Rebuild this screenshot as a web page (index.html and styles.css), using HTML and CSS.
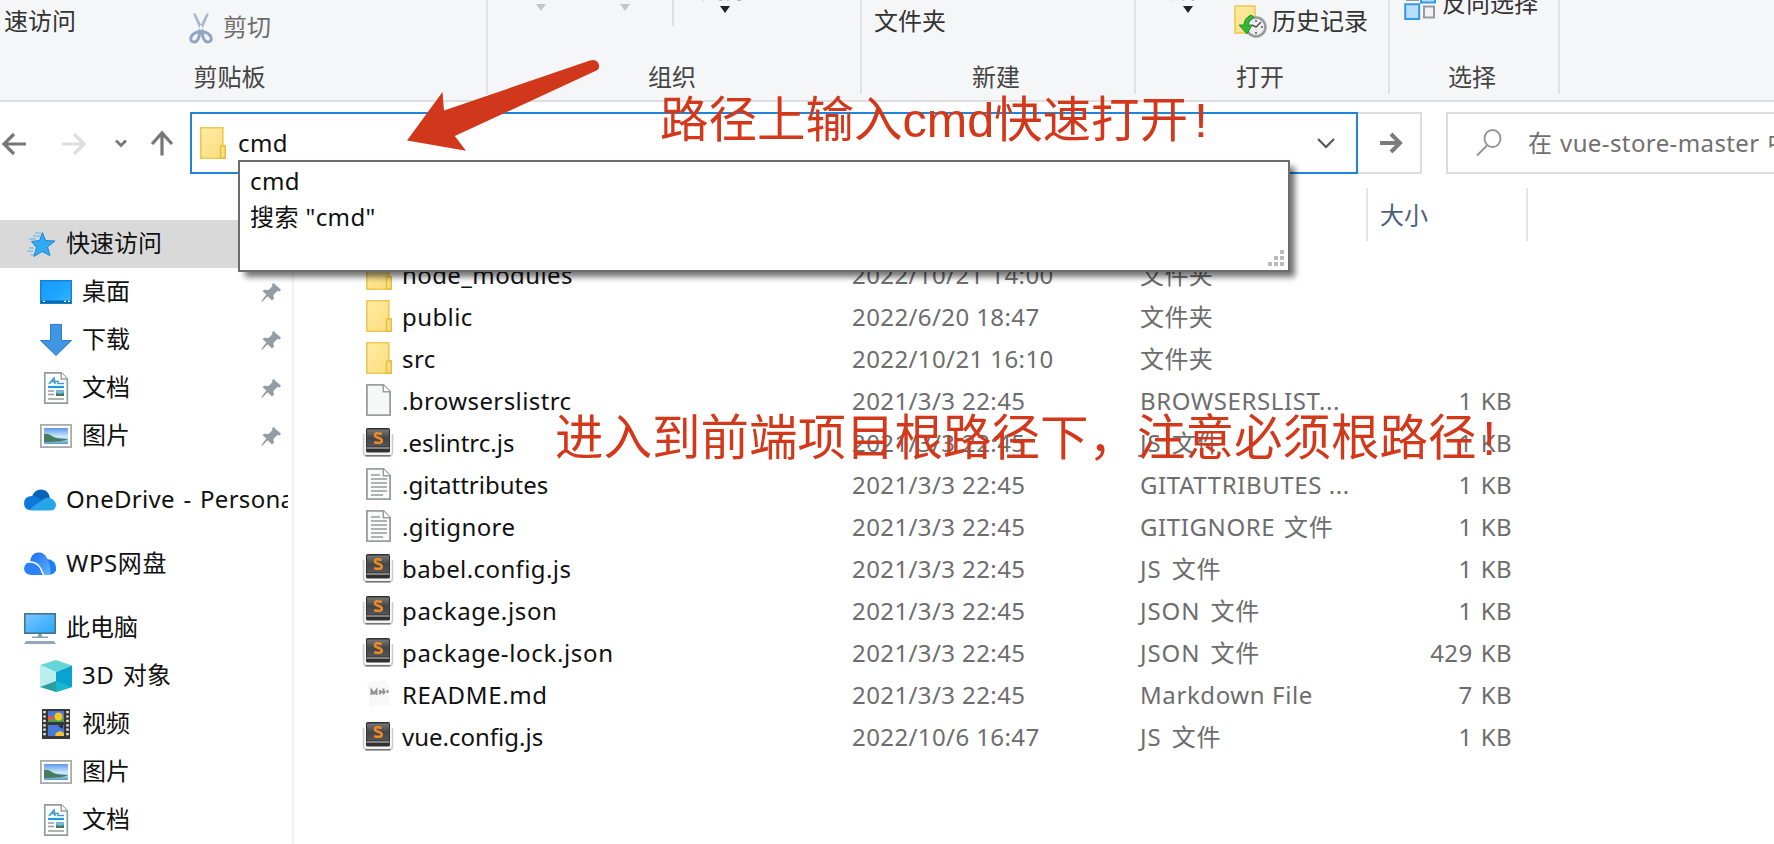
FILE: index.html
```html
<!DOCTYPE html>
<html lang="zh-CN">
<head>
<meta charset="utf-8">
<title>vue-store-master</title>
<link rel="stylesheet" href="styles.css">
</head>
<body>
<svg class="defs" aria-hidden="true">
  <defs>
    <linearGradient id="gFolder" x1="0" y1="0" x2="1" y2="1"><stop offset="0" stop-color="#ffeca4"/><stop offset="1" stop-color="#fbdc7c"/></linearGradient>
    <linearGradient id="gBlue" x1="0" y1="0" x2="1" y2="1"><stop offset="0" stop-color="#7cc8ff"/><stop offset="1" stop-color="#27a5fb"/></linearGradient>
    <linearGradient id="gDesk" x1="0" y1="0" x2="1" y2="1"><stop offset="0" stop-color="#149cfb"/><stop offset=".6" stop-color="#1fa6ff"/><stop offset="1" stop-color="#45b5ff"/></linearGradient>
    <linearGradient id="gSky" x1="0" y1="0" x2="0" y2="1"><stop offset="0" stop-color="#5a97ec"/><stop offset=".55" stop-color="#d3eafa"/><stop offset="1" stop-color="#5a9bd0"/></linearGradient>
    <linearGradient id="gDark" x1="0" y1="0" x2="0" y2="1"><stop offset="0" stop-color="#777"/><stop offset=".5" stop-color="#454545"/><stop offset="1" stop-color="#555"/></linearGradient>
    <linearGradient id="gWps" x1="0" y1="0" x2="1" y2="1"><stop offset="0" stop-color="#1769f5"/><stop offset="1" stop-color="#65b5ff"/></linearGradient>
    <symbol id="folder" viewBox="0 0 26 32"><path d="M.8.8h22v18h2.4v12.4H.8z" fill="url(#gFolder)" stroke="#edc950" stroke-width="1.6"/><path d="M20.5 31V20.5q0-1.7 2.3-1.7 2.4 0 2.4 1.7V31z" fill="#fbdf83" stroke="#e6bd3c" stroke-width="1.4"/></symbol>
    <symbol id="blank" viewBox="0 0 26 32"><path d="M.9.9h16.6l6.6 6.6v23.6H.9z" fill="#f6f8f8" stroke="#999d9d" stroke-width="1.8"/><path d="M17.3.9v6.8h6.8" fill="#fff" stroke="#999d9d" stroke-width="1.5"/></symbol>
    <symbol id="text" viewBox="0 0 26 32"><path d="M.9.9h16.6l6.6 6.6v23.6H.9z" fill="#f9fafa" stroke="#999d9d" stroke-width="1.8"/><path d="M17.3.9v6.8h6.8" fill="#fff" stroke="#999d9d" stroke-width="1.5"/><path d="M5 7h9M5 11h16M5 15h16M5 19h16M5 23h16M5 27h12" stroke="#999" stroke-width="1.4"/></symbol>
    <symbol id="sublime" viewBox="0 0 32 32"><path d="M1.500 8v18.500q0 3 3 3h23q3 0 3-3V8" fill="#fafafa" stroke="#cbcbcb" stroke-width="1.500"/><path d="M3.500 29.800h25" stroke="#777" stroke-width="1.600"/><rect x="4" y="2" width="24" height="24.500" rx="1.600" fill="#303030"/><rect x="5" y="3.500" width="22" height="17" fill="url(#gDark)"/><path d="M4.500 22h23" stroke="#b8b8b8" stroke-width="1.200"/><path d="M19.800 8q-6.800-2-6.800 1.200 0 1.600 3.300 2.600 3.500 1 3.500 3 0 3.200-7.600 1.400" fill="none" stroke="#f08a26" stroke-width="2.500"/></symbol>
    <symbol id="md" viewBox="0 0 26 32"><path d="M1 4l18-2 1 5 4 1v19L4 29z" fill="#f8f8f8"/><path d="M5.500 17v-5l2.500 3.500 2.500-3.500v5M14 12v4.500M17.500 10.500v6M14.500 14h5M21.500 12v3" fill="none" stroke="#929292" stroke-width="2"/></symbol>
    <symbol id="doc" viewBox="0 0 32 32"><path d="M4.8.8h16.5l6 6v24.4H4.8z" fill="#fff" stroke="#969b9d" stroke-width="1.7"/><path d="M21.200.8v6.200h6" fill="#fff" stroke="#969b9d" stroke-width="1.4"/><path d="M9 12l5-6 1 6M11 9.500h8M17 11.500h7" stroke="#3d9bd8" stroke-width="1.600" fill="none"/><path d="M8 15h16" stroke="#229ade" stroke-width="2.200"/><path d="M8 19h6M8 22.500h6M8 27h16" stroke="#999" stroke-width="1.3"/><path d="M16 18h8v6h-8z" fill="#73b5dd"/><path d="M16 21l4 1 4-1v3h-8z" fill="#417961"/></symbol>
    <symbol id="picture" viewBox="0 0 32 32"><rect x=".9" y="4.900" width="30.200" height="22.200" fill="#fff" stroke="#a9abac" stroke-width="1.8"/><path d="M4 8h24v16H4z" fill="url(#gSky)"/><path d="M4 14q4-1 8 2t16 3q-4 3-24 3z" fill="#487b5b"/></symbol>
    <symbol id="desktop" viewBox="0 0 32 32"><rect x=".7" y="4.700" width="30.600" height="22.600" fill="url(#gDesk)" stroke="#1681cc" stroke-width="1.4"/><path d="M1 24.500h30V27H1z" fill="#0e67ab"/><path d="M3 25.400h2M24 25.400h2M28 25.400h2" stroke="#fff" stroke-width="1.4"/></symbol>
    <symbol id="download" viewBox="0 0 32 32"><path d="M10.500.500h11v16h10L16 31.500.500 16.500h10z" fill="#3f97e4" stroke="#2e7fcb"/></symbol>
    <symbol id="star" viewBox="0 0 32 32"><path d="M18.500 4.500l3 8 9.500.500-7.500 6 2.500 8.500-8-4-8 5 2.500-9-5-6 8-1z" fill="#31aaf3" stroke="#188bcf"/><path d="M11 5h6M9 8h7M5 11h7M5 20h5M3 23h6M7 27h3" stroke="#5bb6e9" stroke-width="1.200"/></symbol>
    <symbol id="onedrive" viewBox="0 0 32 32"><path d="M8 13q2-7.500 9-7.500t9 8l-9 5z" fill="#0763b8"/><path d="M5 26q-5-1.500-5-7 .5-7 8-7 6 0 10 5l8 9z" fill="#0d7ad8"/><path d="M6 26q2-4 10-8 5-5 10-4 6 2 6 7.500-.4 5-6 5H9q-2 0-3-.500z" fill="#26a5ea"/></symbol>
    <symbol id="wps" viewBox="0 0 32 32"><path d="M18 12q7-3 12 2 5 8-1 12l-5 1z" fill="#1c7ff5"/><path d="M6 14q1-9 8-9.500 6-.5 9 5.500 5 11 3 17h-7q-1-10-13-13z" fill="url(#gWps)"/><path d="M7 27q-7-1-7-7 1-6 8-6 6 1 9 8l2 5z" fill="#2c82fa"/><path d="M5 14q8-1 12 7 1 4 3 6" stroke="#fff" stroke-width="1.500" fill="none"/></symbol>
    <symbol id="pc" viewBox="0 0 32 32"><rect x=".8" y="1.800" width="30.400" height="19.400" fill="url(#gBlue)" stroke="#477487" stroke-width="1.600"/><path d="M14 22h4v2.500h6v1.400H8v-1.400h6z" fill="#8aa4ae"/><path d="M2 29h28l2 3H0z" fill="#96a6ba"/></symbol>
    <symbol id="cube" viewBox="0 0 32 32"><path d="M16 0l16 5.500L16 12 0 5z" fill="#65d5da"/><path d="M0 5l16 7v20L0 27z" fill="#bdeeee"/><path d="M32 5.500L16 12v20l16-5z" fill="#08a3cf"/><path d="M0 27l16-6v11z" fill="#2b9fa0"/><path d="M32 27l-16-6v11z" fill="#15b9cf"/></symbol>
    <symbol id="video" viewBox="0 0 32 32"><path d="M2 1h28v30H2z" fill="#373737"/><path d="M4.500 3v26M27.500 3v26" stroke="#eee" stroke-width="2.400" stroke-dasharray="2.200 2.200"/><path d="M8 3h16v11H8zM8 17h16v11H8z" fill="#4878db"/><path d="M8 10h16v4H8z" fill="#50a154"/><circle cx="18.500" cy="8.500" r="4" fill="#f2c722"/><path d="M8 8h5v4H8z" fill="#e65646"/><path d="M16 25l4-2 4 2v3h-9z" fill="#f3c22e"/><path d="M18 18l5-2v5z" fill="#292f38"/></symbol>
    <symbol id="pin" viewBox="0 0 22 22"><path d="M13 1l8 7-2 2-2-.500-4 4 .5 4-2 2-4.500-4.500L1 21l-.5-1L5.500 13 1.500 9.500l2-1.500 4.500.500 4-4L11.500 2.500z" fill="#929da5"/></symbol>
    <symbol id="scissors" viewBox="0 0 24 32"><path d="M4 1l2.500 0L16 20l-3 2zM20 1l-2.500 0L8 20l3 2z" fill="#a9b7c9"/><path d="M11 19q-1 10-5.500 10.500-4.500 0-3.500-4.500t9-6zM13 19q1 10 5.500 10.500 4.500 0 3.500-4.500t-9-6z" fill="none" stroke="#92a5c4" stroke-width="3"/></symbol>
    <symbol id="history" viewBox="0 0 34 34"><path d="M1 1h20v27H1z" fill="url(#gFolder)" stroke="#ecc850" stroke-width="1.500"/><circle cx="22" cy="22" r="9.500" fill="#eceeef" stroke="#999" stroke-width="2.500"/><path d="M22 15v2M22 27v2M15 22h2M27 22h2M18 20l4 2 5-5" stroke="#555" stroke-width="1.500" fill="none"/><path d="M17 10q-7 3-7 10H5l8 9 5-9h-4q0-4 6-8z" fill="#35b733" stroke="#1c982a"/></symbol>
    <symbol id="invert" viewBox="0 0 34 32"><path d="M3-4h11v15H3zM20 17.500h10v11H20z" fill="#f3f3f3" stroke="#999" stroke-width="2"/><path d="M17-4h14v17.500H17zM1.200 15.200h14V30h-14z" fill="#b7ddff" stroke="#3599e8" stroke-width="2"/></symbol>
  </defs>
</svg>

<div class="window">
  <header class="ribbon">
    <section class="group group-clip">
      <div class="tools"><span class="tool pin-label">速访问</span><span class="tool cut"><svg width="24" height="33"><use href="#scissors"/></svg><span>剪切</span></span></div>
      <div class="caption">剪贴板</div>
    </section>
    <section class="group group-org">
      <div class="tools"><i class="caret move"></i><i class="caret copy"></i><i class="rule"></i><span class="drop"><span class="drop-label">删除</span><i class="caret dark"></i></span></div>
      <div class="caption">组织</div>
    </section>
    <section class="group group-new">
      <div class="tools"><span class="tool new-label">文件夹</span></div>
      <div class="caption">新建</div>
    </section>
    <section class="group group-open">
      <div class="tools"><span class="drop"><span class="drop-label">属性</span><i class="caret dark"></i></span><span class="tool history"><svg width="34" height="34"><use href="#history"/></svg><span>历史记录</span></span></div>
      <div class="caption">打开</div>
    </section>
    <section class="group group-select">
      <div class="tools"><span class="tool invert"><svg width="34" height="32"><use href="#invert"/></svg><span>反向选择</span></span></div>
      <div class="caption">选择</div>
    </section>
  </header>

  <div class="navbar">
    <svg class="nav-icons" width="190" height="62" fill="none" stroke-width="3.200"><path d="M26 32H4M14 22L4 32l10 10" stroke="#777"/><path d="M62 32h22M74 22l10 10-10 10" stroke="#ddd"/><path d="M116 28.500l5 5 5-5" stroke="#777" stroke-width="2.800"/><path d="M162 43.500V22M152 32l10-11 10 11" stroke="#777"/></svg>
    <div class="address"><svg width="26" height="32"><use href="#folder"/></svg><span class="latin">cmd</span><svg class="chevron" width="18" height="12" fill="none"><path d="M1 2l8 8 8-8" stroke="#555" stroke-width="2.200"/></svg>
      <div class="suggest"><div class="latin">cmd</div><div class="latin">搜索 "cmd"</div>
        <svg class="grip" width="18" height="18" fill="#bbb"><path d="M13 1h4v4h-4zM7 7h4v4H7zM13 7h4v4h-4zM1 13h4v4H1zM7 13h4v4H7zM13 13h4v4h-4z"/></svg>
      </div>
    </div>
    <div class="go"><svg width="23" height="22" fill="none" stroke="#7b7b7b" stroke-width="4"><path d="M0 11h20M11 2l9 9-9 9"/></svg></div>
    <div class="search"><svg width="26" height="28" fill="none" stroke="#9a8f93" stroke-width="1.800"><ellipse cx="16.500" cy="9.500" rx="8" ry="8.500"/><path d="M11 16.500L1 26.500"/></svg><span class="latin">在 vue-store-master 中搜索</span></div>
  </div>

  <div class="body">
    <nav class="sidebar">
      <div class="item root active"><svg><use href="#star"/></svg><span>快速访问</span></div>
      <div class="item"><svg><use href="#desktop"/></svg><span>桌面</span><svg class="pin"><use href="#pin"/></svg></div>
      <div class="item"><svg><use href="#download"/></svg><span>下载</span><svg class="pin"><use href="#pin"/></svg></div>
      <div class="item"><svg><use href="#doc"/></svg><span>文档</span><svg class="pin"><use href="#pin"/></svg></div>
      <div class="item"><svg><use href="#picture"/></svg><span>图片</span><svg class="pin"><use href="#pin"/></svg></div>
      <div class="item root gap"><svg><use href="#onedrive"/></svg><span class="latin clip">OneDrive - Personal</span></div>
      <div class="item root gap"><svg><use href="#wps"/></svg><span class="brand">WPS网盘</span></div>
      <div class="item root gap"><svg><use href="#pc"/></svg><span>此电脑</span></div>
      <div class="item"><svg><use href="#cube"/></svg><span class="objects">3D 对象</span></div>
      <div class="item"><svg><use href="#video"/></svg><span>视频</span></div>
      <div class="item"><svg><use href="#picture"/></svg><span>图片</span></div>
      <div class="item"><svg><use href="#doc"/></svg><span>文档</span></div>
    </nav>
    <main class="files">
      <div class="columns"><div class="size-head">大小</div></div>
      <div class="row"><svg><use href="#folder"/></svg><span class="name">node_modules</span><span>2022/10/21 14:00</span><span>文件夹</span><span></span></div>
      <div class="row"><svg><use href="#folder"/></svg><span class="name">public</span><span>2022/6/20 18:47</span><span>文件夹</span><span></span></div>
      <div class="row"><svg><use href="#folder"/></svg><span class="name">src</span><span>2022/10/21 16:10</span><span>文件夹</span><span></span></div>
      <div class="row"><svg><use href="#blank"/></svg><span class="name">.browserslistrc</span><span>2021/3/3 22:45</span><span class="kind">BROWSERSLIST...</span><span class="size">1 KB</span></div>
      <div class="row"><svg class="wide"><use href="#sublime"/></svg><span class="name tight">.eslintrc.js</span><span>2021/3/3 22:45</span><span class="kind zh">JS 文件</span><span class="size">1 KB</span></div>
      <div class="row"><svg><use href="#text"/></svg><span class="name tight">.gitattributes</span><span>2021/3/3 22:45</span><span class="kind">GITATTRIBUTES ...</span><span class="size">1 KB</span></div>
      <div class="row"><svg><use href="#text"/></svg><span class="name">.gitignore</span><span>2021/3/3 22:45</span><span class="kind zh long">GITIGNORE 文件</span><span class="size">1 KB</span></div>
      <div class="row"><svg class="wide"><use href="#sublime"/></svg><span class="name">babel.config.js</span><span>2021/3/3 22:45</span><span class="kind zh">JS 文件</span><span class="size">1 KB</span></div>
      <div class="row"><svg class="wide"><use href="#sublime"/></svg><span class="name loose">package.json</span><span>2021/3/3 22:45</span><span class="kind zh">JSON 文件</span><span class="size">1 KB</span></div>
      <div class="row"><svg class="wide"><use href="#sublime"/></svg><span class="name loose">package-lock.json</span><span>2021/3/3 22:45</span><span class="kind zh">JSON 文件</span><span class="size">429 KB</span></div>
      <div class="row"><svg><use href="#md"/></svg><span class="name loose">README.md</span><span>2021/3/3 22:45</span><span class="kind">Markdown File</span><span class="size">7 KB</span></div>
      <div class="row"><svg class="wide"><use href="#sublime"/></svg><span class="name tight">vue.config.js</span><span>2022/10/6 16:47</span><span class="kind zh">JS 文件</span><span class="size">1 KB</span></div>
    </main>
  </div>

  <svg class="arrow" width="200" height="100"><path d="M7 90.500L42.500 42l1.500 18.500L190 10.500q6-2 8.500 3 2 5-2 7L54.800 86 66 100.700z" fill="#d1381b"/></svg>
  <div class="note note-path">路径上输入cmd快速打开<span>!</span></div>
  <div class="note note-root">进入到前端项目根路径下，注意必须根路径<span>!</span></div>
</div>
</body>
</html>
```
FILE: styles.css
```css
* { box-sizing: border-box; }
body { margin: 0; background: #fff; color: #111; font: 24px/24px "Noto Sans", "Noto Sans CJK SC", sans-serif; }
svg { display: block; flex: none; }
.defs { position: absolute; width: 0; height: 0; }
.window { position: relative; width: 1774px; height: 844px; overflow: hidden; }
.latin { letter-spacing: .4px; }

/* Ribbon */
.ribbon { display: flex; height: 102px; background: #f5f6f7; border-bottom: 2px solid #dddedf; overflow: hidden; color: #333; white-space: nowrap; }
.group { display: flex; flex: none; flex-direction: column; height: 94px; border-right: 2px solid #e1e2e4; }
.group-clip { width: 515px; margin-left: -27px; }
.group-org { width: 374px; }
.group-new { width: 274px; }
.group-open { width: 254px; }
.group-select { width: 170px; }
.tools { display: flex; align-items: flex-start; height: 65px; }
.caption { padding-right: 4px; text-align: center; color: #444; }
.group-clip .caption { padding-right: 0; }
.tool { display: flex; }
.pin-label { margin: 9px 113px 0 31px; }
.cut { gap: 10px; margin-top: 12px; color: #6d6d6d; }
.cut span { margin-top: 3px; }
.caret { flex: none; border: 5.500px solid transparent; border-top: 7px solid #c3c5c7; border-bottom: 0; }
.caret.dark { border-top-color: #222; }
.move { margin: 4px 0 0 48px; }
.copy { margin: 4px 0 0 74px; }
.rule { width: 2px; height: 26px; margin-left: 42px; background: #dfe0e2; }
.drop { display: flex; flex-direction: column; align-items: center; margin: -23px 0 0 27px; color: #888; }
.drop-label { height: 29px; }
.new-label { margin: 9px 0 0 12px; }
.group-open .drop { margin-left: 28px; }
.history { gap: 4px; margin: 5px 0 0 22px; }
.history span { margin-top: 4px; }
.invert { gap: 4px; margin: -11px 0 0 14px; }
.invert span { margin-top: 2px; }

/* Address bar */
.navbar { display: flex; height: 72px; padding-top: 10px; }
.nav-icons { width: 190px; }
.address { position: relative; display: flex; align-items: center; flex: none; width: 1168px; height: 62px; padding: 0 21px 0 8px; border: 2px solid #1f84dc; }
.address > .latin { margin-left: 12px; }
.chevron { margin-left: auto; }
.suggest { position: absolute; z-index: 2; left: 46px; top: 46px; width: 1052px; height: 112px; padding: 7px 10px; border: 2px solid #6d6d6d; background: #fff; box-shadow: 6px 6px 6px -1px rgba(0,0,0,.55); }
.suggest .latin { height: 36px; }
.grip { position: absolute; right: 3px; bottom: 3px; }
.go { display: flex; align-items: center; justify-content: center; flex: none; width: 64px; height: 62px; padding-left: 4px; border: 2px solid #dcdcdc; border-left: 0; }
.search { display: flex; flex: none; align-items: center; gap: 26px; width: 400px; height: 62px; margin-left: 24px; padding-left: 28px; border: 2px solid #dcdcdc; color: #707070; white-space: nowrap; }
.search .latin { word-spacing: 1px; }

/* Navigation tree */
.body { display: flex; height: 670px; }
.sidebar { flex: none; width: 294px; padding-top: 46px; border-right: 2px solid #f2f2f2; }
.item { display: flex; align-items: center; height: 48px; padding: 0 10px 0 40px; white-space: nowrap; }
.item svg { width: 32px; height: 32px; }
.item span { margin: -3px 0 0 10px; }
.item.root { padding: 0 4px 0 24px; }
.item .clip { overflow: hidden; line-height: 34px; letter-spacing: .3px; word-spacing: 2px; }
.brand { letter-spacing: .6px; }
.objects { letter-spacing: .4px; word-spacing: 2px; }
.active { background: #d9d9d9; margin-right: -2px; }
.gap { margin-top: 16px; }
.item .pin { width: 21px; height: 21px; margin-left: auto; }

/* File list */
.files { flex: none; width: 1480px; }
.columns { display: flex; height: 79px; padding: 14px 0 12px 1072px; color: #4c607a; }
.size-head { width: 162px; height: 53px; padding: 15px 0 0 12px; border: solid #e5e5e5; border-width: 0 2px; }
.row { display: grid; grid-template-columns: 36px 450px 288px 230px 142px; align-items: center; height: 42px; padding-left: 72px; color: #6d6d6d; letter-spacing: .4px; white-space: nowrap; }
.row span { padding-top: 2px; }
.row svg { width: 26px; height: 32px; }
.row svg.wide { width: 32px; height: 32px; margin-left: -4px; }
.name { color: #111; }
.name.tight { letter-spacing: 0; }
.name.loose { letter-spacing: .65px; }
.kind { letter-spacing: .6px; }
.kind.zh { letter-spacing: .9px; word-spacing: 3px; }
.kind.long { letter-spacing: .6px; word-spacing: 2px; }
.row .size { text-align: right; word-spacing: 1.5px; }

/* Annotations */
.arrow { position: absolute; z-index: 3; left: 400px; top: 50px; overflow: visible; }
.note { position: absolute; z-index: 3; color: #d4381b; font: 48.5px/56px "Liberation Sans", "Noto Sans CJK SC", sans-serif; white-space: nowrap; }
.note-path { left: 660px; top: 92px; }
.note-root { left: 555px; top: 410px; }
.note span { margin-left: 6px; }
```
